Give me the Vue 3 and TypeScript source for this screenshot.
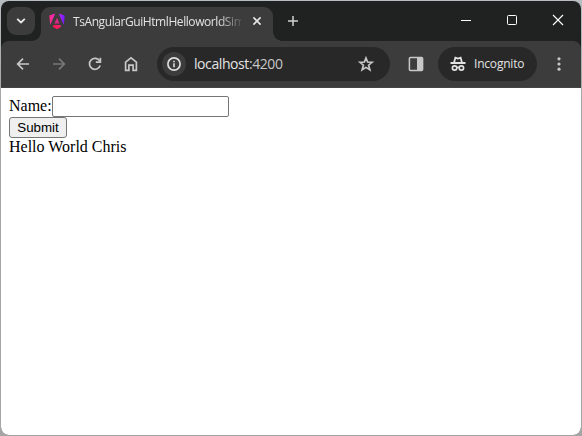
<script setup lang="ts">
import { ref } from 'vue'

const name = ref<string>('')
const greeting = ref<string>('Hello World Chris')
function submit(): void {
  if (name.value) greeting.value = `Hello World ${name.value}`
}
</script>

<template>
  <div class="desktop">
    <div class="window">
      <header class="titlebar">
        <button class="tab-search" aria-label="Search tabs">
          <svg width="10" height="6" viewBox="0 0 10 6"><path d="M1.2 .8 5 4.5 8.8 .8" fill="none" stroke="#e8e8e8" stroke-width="1.8" /></svg>
        </button>
        <div class="tab">
          <svg class="logo" width="16" height="17" viewBox="0 0 16 17">
            <defs>
              <linearGradient id="ng-left" x1="0" y1="0" x2="1" y2="0"><stop offset="0" stop-color="#f52f82" /><stop offset="1" stop-color="#f522c8" /></linearGradient>
              <linearGradient id="ng-right" x1="0" y1="0" x2="1" y2="0"><stop offset="0" stop-color="#c42af0" /><stop offset="1" stop-color="#6b19ff" /></linearGradient>
              <linearGradient id="ng-base" x1="0" y1="0" x2="1" y2="0"><stop offset="0" stop-color="#ff174f" /><stop offset="1" stop-color="#f32070" /></linearGradient>
            </defs>
            <path d="M6.3 .6.3 2.6 1.2 12Z" fill="url(#ng-left)" />
            <path d="M9.7 .6 15.7 2.6 14.8 12Z" fill="url(#ng-right)" />
            <path d="M8 4.4 10.6 10.4H5.4Z" fill="#d92683" />
            <path d="M4.5 12H11.5L12.2 13.8 8 16.3 3.8 13.8Z" fill="url(#ng-base)" />
          </svg>
          <span class="tab-title">TsAngularGuiHtmlHelloworldSimple</span>
          <svg class="tab-close" width="10" height="10" viewBox="0 0 10 10"><path d="M1.4 1.4 8.6 8.6M8.6 1.4 1.4 8.6" stroke="#e3e3e3" stroke-width="1.6" /></svg>
        </div>
        <svg class="new-tab" width="12" height="12" viewBox="0 0 12 12"><path d="M6 1V11M1 6H11" stroke="#d2d2d2" stroke-width="1.5" /></svg>
        <div class="controls">
          <svg width="12" height="12" viewBox="0 0 12 12"><path d="M1 6.5H11" stroke="#fff" /></svg>
          <svg width="12" height="12" viewBox="0 0 12 12"><rect x="1.5" y="1.5" width="9" height="9" rx="1" fill="none" stroke="#fff" /></svg>
          <svg width="12" height="12" viewBox="0 0 12 12"><path d="M1 1 11 11M11 1 1 11" stroke="#fff" stroke-width="1.1" /></svg>
        </div>
      </header>

      <nav class="toolbar">
        <div class="nav-icons">
          <svg width="16" height="16" viewBox="0 0 16 16"><path d="M14 8H3M8 2.7 2.7 8 8 13.3" fill="none" stroke="#c7c7c7" stroke-width="1.7" /></svg>
          <svg width="16" height="16" viewBox="0 0 16 16"><path d="M2 8H13M8 2.7 13.3 8 8 13.3" fill="none" stroke="#777" stroke-width="1.7" /></svg>
          <svg width="16" height="16" viewBox="0 0 16 16"><path d="M12.8 5.2A5.5 5.5 0 1 0 13.2 9.6" fill="none" stroke="#c7c7c7" stroke-width="1.7" /><path d="M13.4 1.8V6.2H8.8" fill="none" stroke="#c7c7c7" stroke-width="1.7" /></svg>
          <svg width="16" height="16" viewBox="0 0 16 16"><path d="M2.6 14.3V6.1L8 1.9 13.4 6.1V14.3H10.1V9.1H5.9V14.3Z" fill="none" stroke="#c7c7c7" stroke-width="1.7" /></svg>
        </div>
        <div class="omnibox">
          <span class="info">
            <svg width="14" height="14" viewBox="0 0 14 14"><circle cx="7" cy="7" r="6.1" fill="none" stroke="#dedede" stroke-width="1.7" /><path d="M7 6.2V10.3M7 3.7V5.2" stroke="#dedede" stroke-width="1.6" /></svg>
          </span>
          <span class="url"><span class="host">localhost</span>:4200</span>
          <svg class="star" width="16" height="16" viewBox="0 0 16 16"><path d="M8 2 9.6 6 14 6.3 10.6 9.2 11.9 13.8 8 11.4 4.1 13.8 5.4 9.2 2 6.3 6.4 6Z" fill="none" stroke="#c7c7c7" stroke-width="1.7" /></svg>
        </div>
        <svg class="panel" width="16" height="16" viewBox="0 0 16 16"><rect x="1.4" y="1.4" width="13.2" height="13.2" rx="1" fill="none" stroke="#c7c7c7" stroke-width="1.5" /><path d="M9 1.5H14.4V14.5H9Z" fill="#c7c7c7" /></svg>
        <div class="incognito">
          <svg width="16" height="16" viewBox="0 0 16 16">
            <path d="M.5 7H15.5M4 6.8 5.4 1.6 8 2.5 10.6 1.6 12 6.8" fill="none" stroke="#e3e3e3" stroke-width="1.8" />
            <circle cx="4.6" cy="12" r="2.2" fill="none" stroke="#e3e3e3" stroke-width="1.7" />
            <circle cx="11.4" cy="12" r="2.2" fill="none" stroke="#e3e3e3" stroke-width="1.7" />
            <path d="M6.6 11.6Q8 10.7 9.4 11.6" fill="none" stroke="#e3e3e3" stroke-width="1.3" />
          </svg>
          <span>Incognito</span>
        </div>
        <svg class="menu" width="4" height="16" viewBox="0 0 4 16"><g fill="#c7c7c7"><circle cx="2" cy="2.8" r="1.6" /><circle cx="2" cy="8" r="1.6" /><circle cx="2" cy="13.2" r="1.6" /></g></svg>
      </nav>

      <main class="page">
        <form @submit.prevent="submit">
          <div class="field"><label for="name">Name:</label><input id="name" v-model="name" type="text" /></div>
          <button class="submit" type="submit">Submit</button>
        </form>
        <div class="greeting">{{ greeting }}</div>
      </main>
    </div>
  </div>
</template>

<style>
body { margin: 0; overflow: hidden; }
</style>

<style scoped>
* { box-sizing: border-box; }
svg { display: block; flex: none; }
.desktop { width: 582px; height: 436px; padding: 1px; background: linear-gradient(#b8bdc1, #a5a5a5 25%, #a5a5a5); }
.window { height: 434px; border-radius: 8px; overflow: hidden; background: #202221; display: flex; flex-direction: column; font-family: "Open Sans", "Noto Sans", sans-serif; }
.titlebar { height: 40px; display: flex; align-items: flex-start; padding: 6px 0 0 6px; }
.tab-search { width: 28px; height: 28px; margin: 0; padding: 0; border: 0; border-radius: 9px; background: #3c3c3c; display: flex; align-items: center; justify-content: center; }
.tab { position: relative; width: 232px; height: 34px; margin-left: 6px; padding: 0 11px 6px 8px; display: flex; align-items: center; background: #3c3c3c; border-radius: 9px 9px 0 0; }
.tab::before, .tab::after { content: ""; position: absolute; bottom: 0; width: 9px; height: 9px; }
.tab::before { left: -9px; background: radial-gradient(circle at 0 0, transparent 8.5px, #3c3c3c 9px); }
.tab::after { right: -9px; background: radial-gradient(circle at 100% 0, transparent 8.5px, #3c3c3c 9px); }
.tab-title { width: 168px; margin-left: 8px; padding-top: 1px; overflow: hidden; white-space: nowrap; font-size: 12px; line-height: 18px; letter-spacing: -0.42px; color: #e3e3e3; mask-image: linear-gradient(90deg, #000 145px, transparent 172px); }
.tab-close { margin-left: auto; }
.new-tab { margin: 8px 0 0 14px; }
.controls { margin: 7px 17px 0 auto; display: flex; gap: 34px; }
.toolbar { height: 47px; display: flex; align-items: center; padding: 0 20px 1px 14px; background: #3c3c3c; border-radius: 8px 8px 0 0; border-bottom: 1px solid #454343; }
.nav-icons { display: flex; gap: 20px; }
.omnibox { width: 233px; height: 34px; margin-left: 18px; padding: 0 16px 0 5px; display: flex; align-items: center; background: #282828; border-radius: 17px; }
.info { width: 24px; height: 24px; border-radius: 50%; background: #3c3c3c; display: flex; align-items: center; justify-content: center; }
.url { margin-left: 8px; font-size: 14px; line-height: 20px; letter-spacing: -0.42px; color: #c7c7c7; }
.host { color: #e3e3e3; }
.star { margin-left: auto; }
.panel { margin-left: 18px; }
.incognito { width: 99px; height: 34px; margin-left: 14px; padding-left: 12px; display: flex; align-items: center; gap: 8px; background: #282828; border-radius: 17px; color: #e3e3e3; font-size: 12px; letter-spacing: -0.2px; }
.menu { margin-left: auto; }
.page { flex: 1; padding: 8px; background: #fff; color: #000; font-family: "Liberation Serif", serif; font-size: 16px; line-height: 18px; }
.field { display: flex; height: 21px; align-items: flex-start; }
.field input { width: 177px; height: 21px; margin: 0; padding: 1px 2px; border: 1px solid #767676; border-radius: 2px; font: 13.333px "Liberation Sans", sans-serif; outline: 0; }
.field label { width: 43px; padding-top: 1px; white-space: nowrap; }
.submit { display: block; width: 58px; height: 21px; margin: 0; padding: 0; border: 1px solid #767676; border-radius: 3px; background: #efefef; color: #000; font: 13.333px "Liberation Sans", sans-serif; }
</style>
